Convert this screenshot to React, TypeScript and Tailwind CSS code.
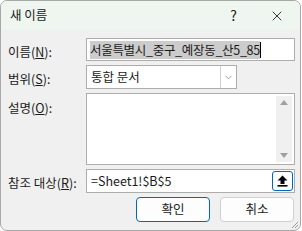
import { ChevronDown, X } from 'lucide-react';

const Label = ({ text, k }: { text: string; k: string }) => (
  <span className="whitespace-nowrap text-[12.5px] text-[#1a1a1a]">
    {text}(<span className="underline underline-offset-[1px]">{k}</span>):
  </span>
);

const App = () => {
  return (
    <div
      className="w-[302px] h-[231px] bg-white overflow-hidden"
      style={{ fontFamily: '"Noto Sans CJK KR", "Noto Sans", sans-serif' }}
    >
      <div className="relative w-[301px] h-[231px] rounded-[7px] border border-[#a8a8a8] bg-[#f0f0f0] overflow-hidden">
        {/* title bar */}
        <div className="flex items-center h-[29px] bg-[#eef6ef] pl-[9px]">
          <span className="text-[12.5px] text-[#1a1a1a]">새 이름</span>
          <span className="ml-auto mr-[32px] text-[14px] text-[#1a1a1a]">?</span>
          <X size={16} strokeWidth={1.3} className="mr-[15px] text-[#1a1a1a]" />
        </div>

        <div className="flex flex-col pl-[7px] pr-[5px]">
          {/* name */}
          <div className="flex items-center mt-[8px] h-[23px]">
            <div className="w-[78px]">
              <Label text="이름" k="N" />
            </div>
            <div className="flex items-center w-[209px] h-[23px] border border-[#adadad] bg-white pl-[3px]">
              <span className="bg-[#cccccc] text-[12.5px] leading-[18px] text-[#1a1a1a] tracking-[-0.3px]">
                서울특별시_중구_예장동_산5_85
              </span>
              <span className="w-px h-[16px] bg-black" />
            </div>
          </div>

          {/* scope */}
          <div className="flex items-center mt-[4px] h-[24px]">
            <div className="w-[78px]">
              <Label text="범위" k="S" />
            </div>
            <div className="flex items-center w-[151px] h-[24px] border border-[#adadad] bg-white">
              <span className="flex-1 pl-[4px] text-[12.5px] text-[#1a1a1a]">통합 문서</span>
              <div className="flex items-center justify-center w-[16px] h-full border-l border-[#d0d0d0]">
                <ChevronDown size={11} strokeWidth={1.2} className="text-[#555]" />
              </div>
            </div>
          </div>

          {/* description */}
          <div className="flex items-start mt-[4px]">
            <div className="w-[78px] pt-[1px]">
              <Label text="설명" k="O" />
            </div>
            <div className="flex justify-end w-[209px] h-[72px] border border-[#adadad] bg-white p-[2px]">
              <div className="flex flex-col items-center justify-between w-[16px] h-full bg-[#f0f0f0] py-[4px]">
                <span className="w-0 h-0 border-l-[4px] border-r-[4px] border-b-[5px] border-l-transparent border-r-transparent border-b-[#a0a0a0]" />
                <span className="w-0 h-0 border-l-[4px] border-r-[4px] border-t-[5px] border-l-transparent border-r-transparent border-t-[#a0a0a0]" />
              </div>
            </div>
          </div>

          {/* refers to */}
          <div className="flex items-center mt-[4px] h-[24px]">
            <div className="w-[78px]">
              <Label text="참조 대상" k="R" />
            </div>
            <div className="flex items-center w-[209px] h-[24px] border border-[#adadad] bg-white pl-[4px] pr-[1px]">
              <span className="flex-1 text-[12.5px] text-[#1a1a1a]">=Sheet1!$B$5</span>
              <div className="flex items-center justify-center w-[21px] h-[20px] rounded-[3px] border border-[#0067c0] bg-[#fdfdfd]">
                <svg width="11" height="12" viewBox="0 0 11 12">
                  <path d="M5.5 0.5 L0.5 5.5 H3.5 V9 H7.5 V5.5 H10.5 Z" fill="#000" />
                  <rect x="0.5" y="10" width="10" height="1.6" fill="#000" />
                </svg>
              </div>
            </div>
          </div>

          {/* buttons */}
          <div className="flex justify-end gap-[10px] mt-[4px] pr-[1px]">
            <button className="w-[74px] h-[25px] rounded-[4px] border border-[#0067c0] bg-[#fdfdfd] text-[12.5px] text-[#1a1a1a]">
              확인
            </button>
            <button className="w-[74px] h-[25px] rounded-[4px] border border-[#d0d0d0] bg-[#fdfdfd] text-[12.5px] text-[#1a1a1a]">
              취소
            </button>
          </div>
        </div>

        {/* resize grip */}
        <svg className="absolute right-[1px] bottom-[1px]" width="8" height="8" viewBox="0 0 8 8">
          <path d="M7 1 L1 7 M7 4 L4 7" stroke="#9a9a9a" strokeWidth="1" />
        </svg>
      </div>
    </div>
  );
};

export default App;
